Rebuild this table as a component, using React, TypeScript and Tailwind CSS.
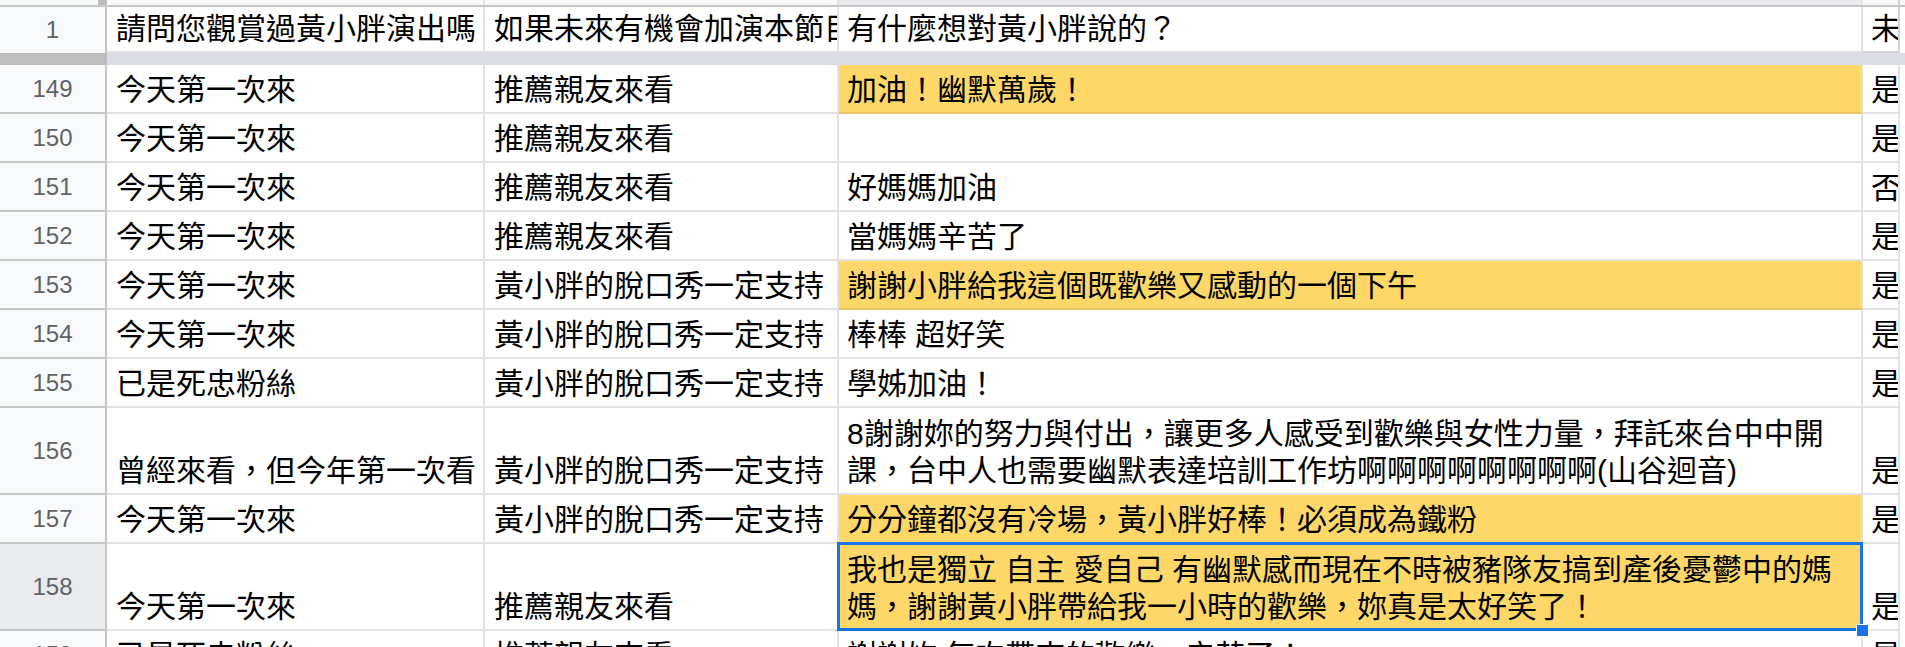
import React from 'react';

// Column template: row header | A | B | C | D | scroll gutter
const GRID = 'grid grid-cols-[107px_378px_354px_1024px_37px_5px]';
const FONT = "font-['Liberation_Sans','Noto_Sans_CJK_TC',sans-serif]";

type Row = {
  num: number;
  a: string;
  b: string;
  c: string[];
  d: string;
  tall?: boolean;
  yellow?: boolean;
  selected?: boolean;
};

const rows: Row[] = [
  { num: 149, a: '今天第一次來', b: '推薦親友來看', c: ['加油！幽默萬歲！'], d: '是', yellow: true },
  { num: 150, a: '今天第一次來', b: '推薦親友來看', c: [], d: '是' },
  { num: 151, a: '今天第一次來', b: '推薦親友來看', c: ['好媽媽加油'], d: '否' },
  { num: 152, a: '今天第一次來', b: '推薦親友來看', c: ['當媽媽辛苦了'], d: '是' },
  {
    num: 153,
    a: '今天第一次來',
    b: '黃小胖的脫口秀一定支持',
    c: ['謝謝小胖給我這個既歡樂又感動的一個下午'],
    d: '是',
    yellow: true,
  },
  { num: 154, a: '今天第一次來', b: '黃小胖的脫口秀一定支持', c: ['棒棒 超好笑'], d: '是' },
  { num: 155, a: '已是死忠粉絲', b: '黃小胖的脫口秀一定支持', c: ['學姊加油！'], d: '是' },
  {
    num: 156,
    a: '曾經來看，但今年第一次看',
    b: '黃小胖的脫口秀一定支持',
    c: [
      '8謝謝妳的努力與付出，讓更多人感受到歡樂與女性力量，拜託來台中中開',
      '課，台中人也需要幽默表達培訓工作坊啊啊啊啊啊啊啊啊(山谷迴音)',
    ],
    d: '是',
    tall: true,
  },
  {
    num: 157,
    a: '今天第一次來',
    b: '黃小胖的脫口秀一定支持',
    c: ['分分鐘都沒有冷場，黃小胖好棒！必須成為鐵粉'],
    d: '是',
    yellow: true,
  },
  {
    num: 158,
    a: '今天第一次來',
    b: '推薦親友來看',
    c: [
      '我也是獨立 自主 愛自己 有幽默感而現在不時被豬隊友搞到產後憂鬱中的媽',
      '媽，謝謝黃小胖帶給我一小時的歡樂，妳真是太好笑了！',
    ],
    d: '是',
    tall: true,
    yellow: true,
    selected: true,
  },
  { num: 159, a: '已是死忠粉絲', b: '推薦親友來看', c: ['謝謝妳 每次帶來的歡樂，辛苦了！'], d: '是' },
];

const cellBase =
  'flex flex-col justify-end overflow-hidden whitespace-nowrap border-r-2 border-b-2 pb-[4px] text-[30px] leading-[37px] text-black';

function SheetRow({ row }: { row: Row }) {
  const height = row.tall ? 'h-[87px]' : 'h-[49px]';
  return (
    <div className={`${GRID} ${height}`}>
      <div
        className={`flex items-center justify-center border-r-2 border-b-2 border-[#c4c7c5] text-[24px] text-[#5f6368] ${
          row.selected ? 'bg-[#e8eaed]' : 'bg-[#f8f9fa]'
        }`}
      >
        {row.num}
      </div>
      <div className={`${cellBase} border-[#e2e2e2] pl-[9px]`}>{row.a}</div>
      <div className={`${cellBase} border-[#e2e2e2] pl-[9px]`}>{row.b}</div>
      <div
        className={`relative border-r-2 border-b-2 ${
          row.yellow ? 'border-b-[#e9c765] border-r-[#e2e2e2] bg-[#fdd868]' : 'border-[#e2e2e2]'
        }`}
      >
        <div className="flex h-full flex-col justify-end overflow-hidden whitespace-nowrap pb-[4px] pl-[8px] text-[30px] leading-[37px] text-black">
          {row.c.map((line) => (
            <span key={line}>{line}</span>
          ))}
        </div>
        {/* Active cell outline + fill handle */}
        {row.selected && (
          <>
            <div className="pointer-events-none absolute -top-[2px] -right-[2px] -bottom-[2px] -left-[2px] z-10 border-[3px] border-[#1a73e8]" />
            <div className="absolute -right-[8px] -bottom-[8px] z-20 h-[13px] w-[13px] border border-white bg-[#1a73e8]" />
          </>
        )}
      </div>
      <div className={`${cellBase} border-[#e2e2e2] pl-[8px]`}>{row.d}</div>
      <div className="bg-white" />
    </div>
  );
}

export default function App() {
  return (
    <div className={`h-[647px] w-[1905px] overflow-hidden bg-white ${FONT}`}>
      {/* Column header strip, scrolled almost out of view */}
      <div className={`${GRID} h-[7px] border-b-2 border-[#c4c7c5]`}>
        <div className="flex bg-[#f8f9fa]">
          <div className="flex-1" />
          <div className="w-[9px] bg-[#bdbdbd]" />
        </div>
        <div className="border-r-2 border-[#e2e2e2] bg-[#f8f9fa]" />
        <div className="border-r-2 border-[#e2e2e2] bg-[#f8f9fa]" />
        <div className="border-r-2 border-[#e2e2e2] bg-[#e8eaed]" />
        <div className="border-r-2 border-[#d4d4d4] bg-[#f8f9fa]" />
        <div className="bg-[#f8f9fa]" />
      </div>

      {/* Frozen row 1 */}
      <div className={`${GRID} h-[46px]`}>
        <div className="flex items-center justify-center border-r-2 border-[#c4c7c5] bg-[#f8f9fa] text-[24px] text-[#5f6368]">
          1
        </div>
        <div className={`${cellBase} border-b-0 border-[#e2e2e2] pl-[9px]`}>請問您觀賞過黃小胖演出嗎</div>
        <div className={`${cellBase} border-b-0 border-[#e2e2e2] pl-[9px]`}>如果未來有機會加演本節目，您會推薦嗎？</div>
        <div className={`${cellBase} border-b-0 border-[#e2e2e2] pl-[8px]`}>有什麼想對黃小胖說的？</div>
        <div className={`${cellBase} border-b-0 border-[#d4d4d4] pl-[8px]`}>未來</div>
        <div className="bg-white" />
      </div>

      {/* Freeze separator */}
      <div className="flex h-[12px]">
        <div className="w-[107px] bg-[#bdbdbd]" />
        <div className="flex-1 bg-[#dadde3]" />
      </div>

      {rows.map((row) => (
        <SheetRow key={row.num} row={row} />
      ))}
    </div>
  );
}
